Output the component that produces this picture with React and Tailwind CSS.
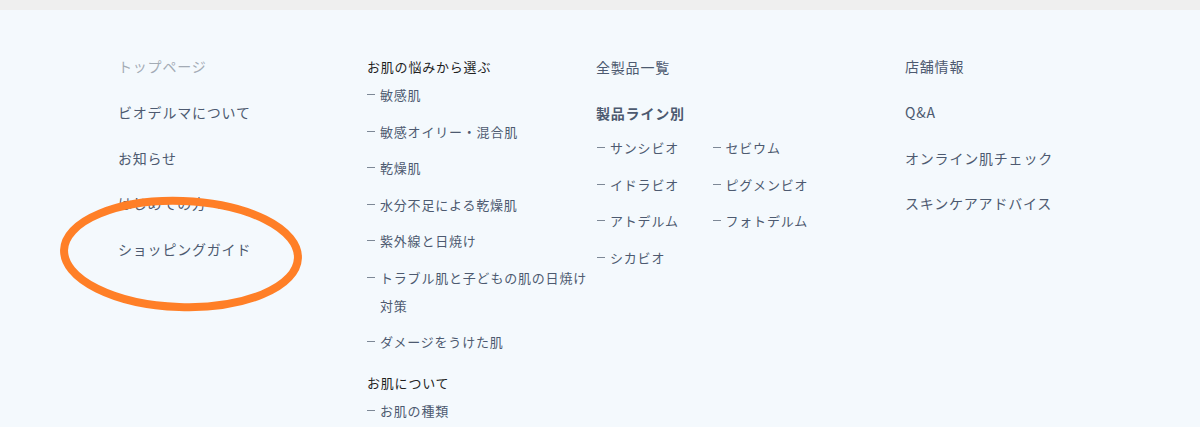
const leftLinks = ["トップページ", "ビオデルマについて", "お知らせ", "はじめての方へ", "ショッピングガイド"];

const concerns = [
  "敏感肌",
  "敏感オイリー・混合肌",
  "乾燥肌",
  "水分不足による乾燥肌",
  "紫外線と日焼け",
  "トラブル肌と子どもの肌の日焼け対策",
  "ダメージをうけた肌",
];

const lines = ["サンシビオ", "セビウム", "イドラビオ", "ピグメンビオ", "アトデルム", "フォトデルム", "シカビオ"];

const rightLinks = ["店舗情報", "Q&A", "オンライン肌チェック", "スキンケアアドバイス"];

const Dash = () => (
  <span className="mt-[13px] mr-[5px] h-px w-[8px] shrink-0 bg-[#7d8896]" />
);

const SubItem = ({ children }) => (
  <li className="flex leading-[28px]">
    <Dash />
    <span>{children}</span>
  </li>
);

const App = () => {
  return (
    <div
      className="relative h-[427px] overflow-hidden bg-[#f4f9fd] text-[#4d5a70]"
      style={{ fontFamily: '"Noto Sans CJK JP", "Noto Sans", sans-serif' }}
    >
      <div className="h-[10px] bg-[#efefef]" />

      <div className="flex pt-[42px] pl-[118px] tracking-[0.05em]">
        {/* column 1 */}
        <ul className="flex w-[249px] shrink-0 flex-col gap-[17.8px] text-[14px] leading-[28px]">
          {leftLinks.map((label, i) => (
            <li key={label} className={i === 0 ? "text-[#a3abb5]" : ""}>
              {label}
            </li>
          ))}
        </ul>

        {/* column 2 */}
        <div className="mt-[1px] flex w-[229px] shrink-0 flex-col text-[13px]">
          <p className="leading-[28px] text-[#1f1f1f]">お肌の悩みから選ぶ</p>
          <ul className="flex flex-col gap-[8.5px]">
            {concerns.map((c) => (
              <SubItem key={c}>{c}</SubItem>
            ))}
          </ul>
          <p className="mt-[13px] leading-[28px] text-[#1f1f1f]">お肌について</p>
          <ul className="flex flex-col gap-[8.5px]">
            <SubItem>お肌の種類</SubItem>
          </ul>
        </div>

        {/* column 3 */}
        <div className="mt-[1px] flex w-[309px] shrink-0 flex-col">
          <p className="text-[14px] leading-[28px]">全製品一覧</p>
          <p className="mt-[18px] text-[14px] font-bold leading-[28px]">製品ライン別</p>
          <ul className="mt-[7px] grid w-[232px] grid-cols-2 gap-y-[8.5px] pl-px text-[13px]">
            {lines.map((l) => (
              <SubItem key={l}>{l}</SubItem>
            ))}
          </ul>
        </div>

        {/* column 4 */}
        <ul className="flex flex-col gap-[17.8px] text-[14px] leading-[28px]">
          {rightLinks.map((label) => (
            <li key={label}>{label}</li>
          ))}
        </ul>
      </div>

      {/* hand-drawn highlight */}
      <svg
        className="pointer-events-none absolute left-[50px] top-[188px]"
        width="270"
        height="135"
        viewBox="0 0 270 135"
      >
        <ellipse
          cx="131"
          cy="66"
          rx="117"
          ry="53"
          transform="rotate(2 131 66)"
          fill="none"
          stroke="#ff7f27"
          strokeWidth="8"
        />
      </svg>
    </div>
  );
};

export default App;
